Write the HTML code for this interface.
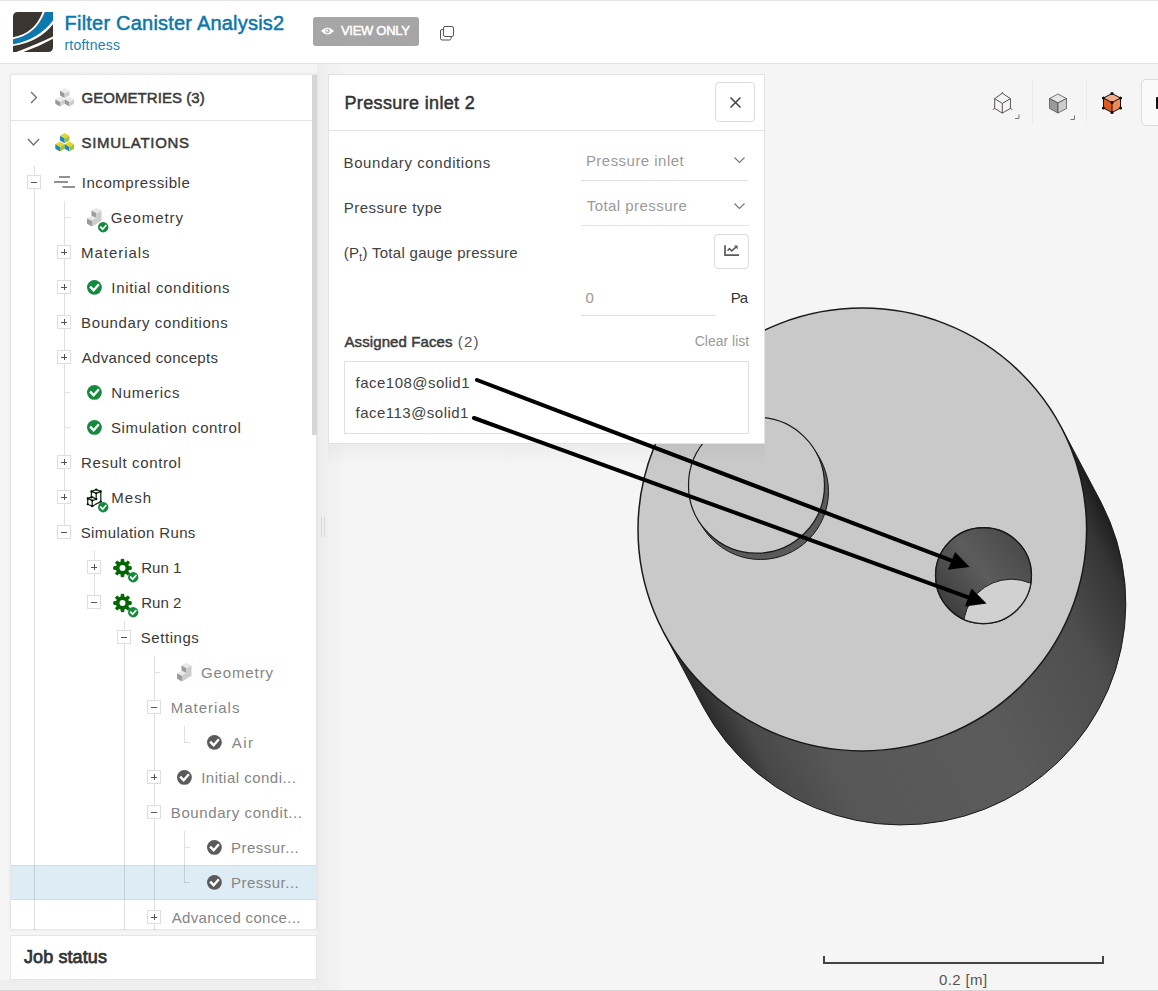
<!DOCTYPE html>
<html><head><meta charset="utf-8">
<style>
html,body{margin:0;padding:0;}
body{width:1158px;height:991px;overflow:hidden;position:relative;background:#f5f5f5;font-family:"Liberation Sans", sans-serif;}
.t{position:absolute;line-height:1;white-space:nowrap;}
svg{position:absolute;overflow:visible;}
</style></head><body>
<svg style="left:0;top:0" width="1158" height="991" viewBox="0 0 1158 991">
<defs>
<linearGradient id="side" x1="1080.7" y1="463.9" x2="683.1" y2="669.1" gradientUnits="userSpaceOnUse">
<stop offset="0" stop-color="#1e1e1e"/><stop offset="0.05" stop-color="#353535"/><stop offset="0.18" stop-color="#4e4e4e"/><stop offset="0.45" stop-color="#5b5b5b"/><stop offset="0.8" stop-color="#575757"/><stop offset="0.93" stop-color="#484848"/><stop offset="1" stop-color="#2a2a2a"/>
</linearGradient>
<linearGradient id="hole" x1="940" y1="610" x2="1030" y2="540" gradientUnits="userSpaceOnUse">
<stop offset="0" stop-color="#3a3a3a"/><stop offset="0.5" stop-color="#5c5c5c"/><stop offset="1" stop-color="#464646"/>
</linearGradient>
<clipPath id="hclip"><circle cx="983.5" cy="575.6" r="48"/></clipPath>
</defs>
<path d="M1061.1,426.9 L1100.3,500.9 A224.3,221.4 0 0 1 702.7,706.1 L663.5,632.1 Z" fill="url(#side)" stroke="#1a1a1a" stroke-width="1"/>
<ellipse cx="862.3" cy="529.5" rx="224.3" ry="221.4" fill="#c9c9c9" stroke="#1a1a1a" stroke-width="1.5"/>
<circle cx="760.5" cy="491.5" r="68" fill="#5a5a5a" stroke="#1a1a1a" stroke-width="1"/>
<circle cx="756.5" cy="485.2" r="68" fill="#c9c9c9" stroke="#1a1a1a" stroke-width="1.2"/>
<circle cx="983.5" cy="575.6" r="48" fill="url(#hole)" stroke="#1a1a1a" stroke-width="1.2"/>
<circle cx="1011.3" cy="627.2" r="48" fill="#d1d1d1" stroke="#1a1a1a" stroke-width="1" clip-path="url(#hclip)"/>
<circle cx="983.5" cy="575.6" r="48" fill="none" stroke="#1a1a1a" stroke-width="1.2"/>
</svg>
<div style="position:absolute;left:0px;top:0px;width:1158px;height:63px;background:#fff;border-top:1px solid #e3e3e3;box-sizing:border-box;"></div>
<div style="position:absolute;left:0px;top:63px;width:1158px;height:1px;background:#e2e2e2;"></div>
<svg style="left:13px;top:12px" width="40" height="40" viewBox="0 0 40 40">
<defs><clipPath id="lg"><path d="M5,0 H40 V35 Q40,40 35,40 H0 V5 Q0,0 5,0 Z"/></clipPath></defs>
<g clip-path="url(#lg)">
<rect width="40" height="40" fill="#3a3531"/>
<path d="M0,27.2 Q23,23 31.8,0 L40,0 L40,8.6 Q25,28 0,32.3 Z" fill="#0b78b0"/>
<path d="M0,25.3 Q21.5,21.5 29.5,0 L31.8,0 Q23,23 0,27.2 Z" fill="#fff"/>
<path d="M0,32.3 Q25,28 40,8.6 L40,12.3 Q26,30 0,34.1 Z" fill="#fff"/>
<path d="M2,40.5 Q24,32 40,24.4 L40,26.7 Q26,34.5 9,40.5 Z" fill="#fff"/>
</g></svg>
<div class="t" style="left:64.6px;top:12.67px;font-size:20px;font-weight:400;color:#0b77ac;letter-spacing:0.21px;-webkit-text-stroke:0.5px #0b77ac;">Filter Canister Analysis2</div>
<div class="t" style="left:64.4px;top:37.75px;font-size:14px;font-weight:400;color:#1a7fb3;letter-spacing:0.25px;">rtoftness</div>
<div style="position:absolute;left:313px;top:17px;width:106px;height:29px;background:#a6a6a6;border-radius:3px;"></div>
<svg style="left:321px;top:27px" width="13" height="8" viewBox="0 0 13 8">
<path d="M0,4 Q6.5,-3 13,4 Q6.5,11 0,4 Z" fill="#fff"/><circle cx="6.5" cy="4" r="2.4" fill="#b8b8b8"/><circle cx="6.1" cy="3.6" r="1.1" fill="#fff"/>
</svg>
<div class="t" style="left:341px;top:23.80px;font-size:13px;font-weight:400;color:#fff;letter-spacing:-0.3px;-webkit-text-stroke:0.5px #fff;">VIEW ONLY</div>
<svg style="left:440px;top:26px" width="15" height="15" viewBox="0 0 15 15">
<rect x="3.5" y="0.5" width="10" height="10" rx="1.5" fill="#fff" stroke="#555" stroke-width="1"/>
<path d="M3.5,3.5 H2 Q0.5,3.5 0.5,5 V12.5 Q0.5,14 2,14 H9.5 Q11,14 11,12.5 V10.5" fill="none" stroke="#555" stroke-width="1"/>
</svg>
<div style="position:absolute;left:10px;top:74px;width:307px;height:856px;background:#fff;border:1px solid #e6e6e6;box-sizing:border-box;box-shadow:0 0 3px rgba(0,0,0,0.06);"></div>
<div style="position:absolute;left:11px;top:120px;width:301px;height:1px;background:#e3e3e3;"></div>
<div style="position:absolute;left:312px;top:75px;width:5px;height:360px;background:#d6d6d6;"></div>
<svg style="left:30px;top:91px" width="8" height="13" viewBox="0 0 8 13"><path d="M1,1 L6.5,6.5 L1,12" fill="none" stroke="#707070" stroke-width="1.4"/></svg>
<svg style="left:27px;top:138px" width="13" height="9" viewBox="0 0 13 9"><path d="M1,1 L6.5,7 L12,1" fill="none" stroke="#707070" stroke-width="1.4"/></svg>
<svg style="left:55px;top:88px" width="20" height="20" viewBox="0 0 20 20"><path d="M9.7,0 L14.399999999999999,2.754 L9.7,5.508 L4.999999999999999,2.754 Z" fill="#ececec"/><path d="M4.999999999999999,2.754 L9.7,5.508 L9.7,10.2 L4.999999999999999,7.446 Z" fill="#9a9a9a"/><path d="M14.399999999999999,2.754 L9.7,5.508 L9.7,10.2 L14.399999999999999,7.446 Z" fill="#cfcfcf"/><path d="M5,8.4 L9.7,11.154 L5,13.908000000000001 L0.2999999999999998,11.154 Z" fill="#ececec"/><path d="M0.2999999999999998,11.154 L5,13.908000000000001 L5,18.6 L0.2999999999999998,15.846000000000002 Z" fill="#9a9a9a"/><path d="M9.7,11.154 L5,13.908000000000001 L5,18.6 L9.7,15.846000000000002 Z" fill="#cfcfcf"/><path d="M14.4,8.4 L19.1,11.154 L14.4,13.908000000000001 L9.7,11.154 Z" fill="#ececec"/><path d="M9.7,11.154 L14.4,13.908000000000001 L14.4,18.6 L9.7,15.846000000000002 Z" fill="#9a9a9a"/><path d="M19.1,11.154 L14.4,13.908000000000001 L14.4,18.6 L19.1,15.846000000000002 Z" fill="#cfcfcf"/></svg>
<svg style="left:55px;top:132.5px" width="20" height="20" viewBox="0 0 20 20"><path d="M9.7,0 L14.399999999999999,2.754 L9.7,5.508 L4.999999999999999,2.754 Z" fill="#e2d52b"/><path d="M4.999999999999999,2.754 L9.7,5.508 L9.7,10.2 L4.999999999999999,7.446 Z" fill="#1b86bf"/><path d="M14.399999999999999,2.754 L9.7,5.508 L9.7,10.2 L14.399999999999999,7.446 Z" fill="#9fc23a"/><path d="M5,8.4 L9.7,11.154 L5,13.908000000000001 L0.2999999999999998,11.154 Z" fill="#e2d52b"/><path d="M0.2999999999999998,11.154 L5,13.908000000000001 L5,18.6 L0.2999999999999998,15.846000000000002 Z" fill="#1b86bf"/><path d="M9.7,11.154 L5,13.908000000000001 L5,18.6 L9.7,15.846000000000002 Z" fill="#9fc23a"/><path d="M14.4,8.4 L19.1,11.154 L14.4,13.908000000000001 L9.7,11.154 Z" fill="#e2d52b"/><path d="M9.7,11.154 L14.4,13.908000000000001 L14.4,18.6 L9.7,15.846000000000002 Z" fill="#1b86bf"/><path d="M19.1,11.154 L14.4,13.908000000000001 L14.4,18.6 L19.1,15.846000000000002 Z" fill="#9fc23a"/></svg>
<div class="t" style="left:81.5px;top:90.10px;font-size:15px;font-weight:400;color:#3a3a3a;letter-spacing:0.05px;-webkit-text-stroke:0.5px #3a3a3a;">GEOMETRIES (3)</div>
<div class="t" style="left:81.5px;top:134.70px;font-size:15px;font-weight:400;color:#3a3a3a;letter-spacing:0.7px;-webkit-text-stroke:0.5px #3a3a3a;">SIMULATIONS</div>
<div style="position:absolute;left:11px;top:865px;width:305px;height:35px;background:#deedf5;border-top:1px solid #c9e1ee;border-bottom:1px solid #c9e1ee;box-sizing:border-box;"></div>
<div style="position:absolute;left:34px;top:166px;width:1px;height:764px;background:rgba(0,0,0,0.12);"></div>
<div style="position:absolute;left:64px;top:201px;width:1px;height:331px;background:rgba(0,0,0,0.12);"></div>
<div style="position:absolute;left:94px;top:551px;width:1px;height:51px;background:rgba(0,0,0,0.12);"></div>
<div style="position:absolute;left:124px;top:621px;width:1px;height:309px;background:rgba(0,0,0,0.12);"></div>
<div style="position:absolute;left:154px;top:656px;width:1px;height:274px;background:rgba(0,0,0,0.12);"></div>
<div style="position:absolute;left:184px;top:726px;width:1px;height:17px;background:rgba(0,0,0,0.12);"></div>
<div style="position:absolute;left:184px;top:831px;width:1px;height:52px;background:rgba(0,0,0,0.12);"></div>
<div style="position:absolute;left:65px;top:217px;width:5px;height:1px;background:rgba(0,0,0,0.12);"></div>
<div style="position:absolute;left:65px;top:392px;width:5px;height:1px;background:rgba(0,0,0,0.12);"></div>
<div style="position:absolute;left:65px;top:427px;width:5px;height:1px;background:rgba(0,0,0,0.12);"></div>
<div style="position:absolute;left:155px;top:672px;width:5px;height:1px;background:rgba(0,0,0,0.12);"></div>
<div style="position:absolute;left:185px;top:742px;width:5px;height:1px;background:rgba(0,0,0,0.12);"></div>
<div style="position:absolute;left:185px;top:847px;width:5px;height:1px;background:rgba(0,0,0,0.12);"></div>
<div style="position:absolute;left:185px;top:882px;width:5px;height:1px;background:rgba(0,0,0,0.12);"></div>
<div style="position:absolute;left:27px;top:175px;width:14px;height:14px;background:#fff;border:1px solid #dedede;box-sizing:border-box;"></div>
<div style="position:absolute;left:31px;top:182px;width:6px;height:1px;background:#555;"></div>
<svg style="left:54px;top:176.0px" width="22" height="12" viewBox="0 0 22 12"><path d="M5,1 H16 M0,6 H14 M8.5,11 H21" stroke="#6f6f6f" stroke-width="1.6"/></svg>
<div class="t" style="left:81.75px;top:175.10px;font-size:15px;font-weight:400;color:#3a3a3a;letter-spacing:0.55px;">Incompressible</div>
<svg style="left:87px;top:208.0px" width="16" height="19" viewBox="0 0 16 19"><path d="M4.5,2.6 L9.5,0 L14.5,2.6 L9.5,5.2 Z" fill="#e8e8e8"/><path d="M4.5,2.6 L9.5,5.2 L9.5,15.5 L4.5,12.9 Z" fill="#9c9c9c"/><path d="M14.5,2.6 L9.5,5.2 L9.5,15.5 L14.5,12.9 Z" fill="#cdcdcd"/><path d="M0,10.3 L5,7.7 L10,10.3 L5,12.9 Z" fill="#e8e8e8"/><path d="M0,10.3 L5,12.9 L5,18.4 L0,15.8 Z" fill="#9c9c9c"/><path d="M10,10.3 L5,12.9 L5,18.4 L10,15.8 Z" fill="#cdcdcd"/></svg>
<svg style="left:97.8px;top:221.8px" width="10.4" height="10.4" viewBox="-5.2 -5.2 10.4 10.4"><circle r="5.2" fill="#138a3e"/><path d="M-2.44,0.00 L-0.52,1.98 L2.60,-1.56" fill="none" stroke="#fff" stroke-width="1.66" stroke-linecap="square"/></svg>
<div class="t" style="left:110.8px;top:210.10px;font-size:15px;font-weight:400;color:#3a3a3a;letter-spacing:0.9px;">Geometry</div>
<div style="position:absolute;left:57px;top:245px;width:14px;height:14px;background:#fff;border:1px solid #dedede;box-sizing:border-box;"></div>
<div style="position:absolute;left:61px;top:252px;width:6px;height:1px;background:#555;"></div>
<div style="position:absolute;left:63.5px;top:249px;width:1px;height:6px;background:#555;"></div>
<div class="t" style="left:81.1px;top:245.10px;font-size:15px;font-weight:400;color:#3a3a3a;letter-spacing:0.94px;">Materials</div>
<div style="position:absolute;left:57px;top:280px;width:14px;height:14px;background:#fff;border:1px solid #dedede;box-sizing:border-box;"></div>
<div style="position:absolute;left:61px;top:287px;width:6px;height:1px;background:#555;"></div>
<div style="position:absolute;left:63.5px;top:284px;width:1px;height:6px;background:#555;"></div>
<svg style="left:87.1px;top:279.8px" width="14.8" height="14.8" viewBox="-7.4 -7.4 14.8 14.8"><circle r="7.4" fill="#138a3e"/><path d="M-3.48,0.00 L-0.74,2.81 L3.70,-2.22" fill="none" stroke="#fff" stroke-width="2.37" stroke-linecap="square"/></svg>
<div class="t" style="left:111.3px;top:280.10px;font-size:15px;font-weight:400;color:#3a3a3a;letter-spacing:0.68px;">Initial conditions</div>
<div style="position:absolute;left:57px;top:315px;width:14px;height:14px;background:#fff;border:1px solid #dedede;box-sizing:border-box;"></div>
<div style="position:absolute;left:61px;top:322px;width:6px;height:1px;background:#555;"></div>
<div style="position:absolute;left:63.5px;top:319px;width:1px;height:6px;background:#555;"></div>
<div class="t" style="left:81.1px;top:315.10px;font-size:15px;font-weight:400;color:#3a3a3a;letter-spacing:0.6px;">Boundary conditions</div>
<div style="position:absolute;left:57px;top:350px;width:14px;height:14px;background:#fff;border:1px solid #dedede;box-sizing:border-box;"></div>
<div style="position:absolute;left:61px;top:357px;width:6px;height:1px;background:#555;"></div>
<div style="position:absolute;left:63.5px;top:354px;width:1px;height:6px;background:#555;"></div>
<div class="t" style="left:81.7px;top:350.10px;font-size:15px;font-weight:400;color:#3a3a3a;letter-spacing:0.34px;">Advanced concepts</div>
<svg style="left:87.1px;top:384.8px" width="14.8" height="14.8" viewBox="-7.4 -7.4 14.8 14.8"><circle r="7.4" fill="#138a3e"/><path d="M-3.48,0.00 L-0.74,2.81 L3.70,-2.22" fill="none" stroke="#fff" stroke-width="2.37" stroke-linecap="square"/></svg>
<div class="t" style="left:111.3px;top:385.10px;font-size:15px;font-weight:400;color:#3a3a3a;letter-spacing:0.7px;">Numerics</div>
<svg style="left:87.1px;top:419.8px" width="14.8" height="14.8" viewBox="-7.4 -7.4 14.8 14.8"><circle r="7.4" fill="#138a3e"/><path d="M-3.48,0.00 L-0.74,2.81 L3.70,-2.22" fill="none" stroke="#fff" stroke-width="2.37" stroke-linecap="square"/></svg>
<div class="t" style="left:111.0px;top:420.10px;font-size:15px;font-weight:400;color:#3a3a3a;letter-spacing:0.62px;">Simulation control</div>
<div style="position:absolute;left:57px;top:455px;width:14px;height:14px;background:#fff;border:1px solid #dedede;box-sizing:border-box;"></div>
<div style="position:absolute;left:61px;top:462px;width:6px;height:1px;background:#555;"></div>
<div style="position:absolute;left:63.5px;top:459px;width:1px;height:6px;background:#555;"></div>
<div class="t" style="left:81.1px;top:455.10px;font-size:15px;font-weight:400;color:#3a3a3a;letter-spacing:0.62px;">Result control</div>
<div style="position:absolute;left:57px;top:490px;width:14px;height:14px;background:#fff;border:1px solid #dedede;box-sizing:border-box;"></div>
<div style="position:absolute;left:61px;top:497px;width:6px;height:1px;background:#555;"></div>
<div style="position:absolute;left:63.5px;top:494px;width:1px;height:6px;background:#555;"></div>
<svg style="left:84px;top:485.0px" width="20" height="24" viewBox="0 0 20 24"><g fill="none" stroke="#0f2f0f" stroke-width="1.25" stroke-linejoin="round"><path d="M7.4,6.4 L12.2,4.6 L16.8,6.4 L12.2,8.3 Z M7.4,6.4 V12.6 M12.2,8.3 V14.1 M16.8,6.4 V16.6 L10.5,19.9"/><path d="M3.7,13.4 L8.2,11.9 L12.4,14.1 L8.2,15.6 Z M3.7,13.4 V19.2 L8.2,21.3 V15.6 M8.2,21.3 L10.5,20.1"/></g><g fill="{c}"><circle cx="7.4" cy="6.4" r="1.05"/><circle cx="12.2" cy="4.6" r="1.05"/><circle cx="16.8" cy="6.4" r="1.05"/><circle cx="12.2" cy="8.3" r="1.05"/><circle cx="7.4" cy="12.4" r="1.05"/><circle cx="3.7" cy="13.4" r="1.05"/><circle cx="12.4" cy="14.1" r="1.05"/><circle cx="8.2" cy="15.6" r="1.05"/><circle cx="3.7" cy="19.2" r="1.05"/><circle cx="8.2" cy="21.3" r="1.05"/><circle cx="16.8" cy="16.6" r="1.05"/></g></svg>
<svg style="left:97.8px;top:501.8px" width="10.4" height="10.4" viewBox="-5.2 -5.2 10.4 10.4"><circle r="5.2" fill="#138a3e"/><path d="M-2.44,0.00 L-0.52,1.98 L2.60,-1.56" fill="none" stroke="#fff" stroke-width="1.66" stroke-linecap="square"/></svg>
<div class="t" style="left:111.3px;top:490.10px;font-size:15px;font-weight:400;color:#3a3a3a;letter-spacing:1.0px;">Mesh</div>
<div style="position:absolute;left:57px;top:525px;width:14px;height:14px;background:#fff;border:1px solid #dedede;box-sizing:border-box;"></div>
<div style="position:absolute;left:61px;top:532px;width:6px;height:1px;background:#555;"></div>
<div class="t" style="left:80.7px;top:525.10px;font-size:15px;font-weight:400;color:#3a3a3a;letter-spacing:0.39px;">Simulation Runs</div>
<div style="position:absolute;left:87px;top:560px;width:14px;height:14px;background:#fff;border:1px solid #dedede;box-sizing:border-box;"></div>
<div style="position:absolute;left:91px;top:567px;width:6px;height:1px;background:#555;"></div>
<div style="position:absolute;left:93.5px;top:564px;width:1px;height:6px;background:#555;"></div>
<svg style="left:113px;top:559.0px" width="19" height="19" viewBox="0 0 19 19"><path d="M15.33,7.57 L18.20,7.68 L18.20,10.32 L15.33,10.43 L14.63,12.11 L16.58,14.22 L14.72,16.08 L12.61,14.13 L10.93,14.83 L10.82,17.70 L8.18,17.70 L8.07,14.83 L6.39,14.13 L4.28,16.08 L2.42,14.22 L4.37,12.11 L3.67,10.43 L0.80,10.32 L0.80,7.68 L3.67,7.57 L4.37,5.89 L2.42,3.78 L4.28,1.92 L6.39,3.87 L8.07,3.17 L8.18,0.30 L10.82,0.30 L10.93,3.17 L12.61,3.87 L14.72,1.92 L16.58,3.78 L14.63,5.89 Z" fill="#006700" stroke="#006700" stroke-width="1" stroke-linejoin="round"/><circle cx="9.5" cy="9" r="6.6" fill="#006700"/><circle cx="9.5" cy="9" r="3" fill="#fff"/></svg>
<svg style="left:127.8px;top:571.8px" width="10.4" height="10.4" viewBox="-5.2 -5.2 10.4 10.4"><circle r="5.2" fill="#138a3e"/><path d="M-2.44,0.00 L-0.52,1.98 L2.60,-1.56" fill="none" stroke="#fff" stroke-width="1.66" stroke-linecap="square"/></svg>
<div class="t" style="left:141.2px;top:560.10px;font-size:15px;font-weight:400;color:#3a3a3a;letter-spacing:0.05px;">Run 1</div>
<div style="position:absolute;left:87px;top:595px;width:14px;height:14px;background:#fff;border:1px solid #dedede;box-sizing:border-box;"></div>
<div style="position:absolute;left:91px;top:602px;width:6px;height:1px;background:#555;"></div>
<svg style="left:113px;top:594.0px" width="19" height="19" viewBox="0 0 19 19"><path d="M15.33,7.57 L18.20,7.68 L18.20,10.32 L15.33,10.43 L14.63,12.11 L16.58,14.22 L14.72,16.08 L12.61,14.13 L10.93,14.83 L10.82,17.70 L8.18,17.70 L8.07,14.83 L6.39,14.13 L4.28,16.08 L2.42,14.22 L4.37,12.11 L3.67,10.43 L0.80,10.32 L0.80,7.68 L3.67,7.57 L4.37,5.89 L2.42,3.78 L4.28,1.92 L6.39,3.87 L8.07,3.17 L8.18,0.30 L10.82,0.30 L10.93,3.17 L12.61,3.87 L14.72,1.92 L16.58,3.78 L14.63,5.89 Z" fill="#006700" stroke="#006700" stroke-width="1" stroke-linejoin="round"/><circle cx="9.5" cy="9" r="6.6" fill="#006700"/><circle cx="9.5" cy="9" r="3" fill="#fff"/></svg>
<svg style="left:127.8px;top:606.8px" width="10.4" height="10.4" viewBox="-5.2 -5.2 10.4 10.4"><circle r="5.2" fill="#138a3e"/><path d="M-2.44,0.00 L-0.52,1.98 L2.60,-1.56" fill="none" stroke="#fff" stroke-width="1.66" stroke-linecap="square"/></svg>
<div class="t" style="left:141.2px;top:595.10px;font-size:15px;font-weight:400;color:#3a3a3a;letter-spacing:0.05px;">Run 2</div>
<div style="position:absolute;left:117px;top:630px;width:14px;height:14px;background:#fff;border:1px solid #dedede;box-sizing:border-box;"></div>
<div style="position:absolute;left:121px;top:637px;width:6px;height:1px;background:#555;"></div>
<div class="t" style="left:140.8px;top:630.10px;font-size:15px;font-weight:400;color:#3a3a3a;letter-spacing:0.54px;">Settings</div>
<svg style="left:177px;top:663.0px" width="16" height="19" viewBox="0 0 16 19"><path d="M4.5,2.6 L9.5,0 L14.5,2.6 L9.5,5.2 Z" fill="#e8e8e8"/><path d="M4.5,2.6 L9.5,5.2 L9.5,15.5 L4.5,12.9 Z" fill="#9c9c9c"/><path d="M14.5,2.6 L9.5,5.2 L9.5,15.5 L14.5,12.9 Z" fill="#cdcdcd"/><path d="M0,10.3 L5,7.7 L10,10.3 L5,12.9 Z" fill="#e8e8e8"/><path d="M0,10.3 L5,12.9 L5,18.4 L0,15.8 Z" fill="#9c9c9c"/><path d="M10,10.3 L5,12.9 L5,18.4 L10,15.8 Z" fill="#cdcdcd"/></svg>
<div class="t" style="left:200.9px;top:665.10px;font-size:15px;font-weight:400;color:#858585;letter-spacing:0.9px;">Geometry</div>
<div style="position:absolute;left:147px;top:700px;width:14px;height:14px;background:#fff;border:1px solid #dedede;box-sizing:border-box;"></div>
<div style="position:absolute;left:151px;top:707px;width:6px;height:1px;background:#555;"></div>
<div class="t" style="left:170.8px;top:700.10px;font-size:15px;font-weight:400;color:#858585;letter-spacing:0.97px;">Materials</div>
<svg style="left:207.1px;top:734.8000000000001px" width="14.8" height="14.8" viewBox="-7.4 -7.4 14.8 14.8"><circle r="7.4" fill="#5a5a5a"/><path d="M-3.48,0.00 L-0.74,2.81 L3.70,-2.22" fill="none" stroke="#fff" stroke-width="2.37" stroke-linecap="square"/></svg>
<div class="t" style="left:231.7px;top:735.10px;font-size:15px;font-weight:400;color:#858585;letter-spacing:1.5px;">Air</div>
<div style="position:absolute;left:147px;top:770px;width:14px;height:14px;background:#fff;border:1px solid #dedede;box-sizing:border-box;"></div>
<div style="position:absolute;left:151px;top:777px;width:6px;height:1px;background:#555;"></div>
<div style="position:absolute;left:153.5px;top:774px;width:1px;height:6px;background:#555;"></div>
<svg style="left:177.1px;top:769.8000000000001px" width="14.8" height="14.8" viewBox="-7.4 -7.4 14.8 14.8"><circle r="7.4" fill="#5a5a5a"/><path d="M-3.48,0.00 L-0.74,2.81 L3.70,-2.22" fill="none" stroke="#fff" stroke-width="2.37" stroke-linecap="square"/></svg>
<div class="t" style="left:201.2px;top:770.10px;font-size:15px;font-weight:400;color:#858585;letter-spacing:0.48px;">Initial condi...</div>
<div style="position:absolute;left:147px;top:805px;width:14px;height:14px;background:#fff;border:1px solid #dedede;box-sizing:border-box;"></div>
<div style="position:absolute;left:151px;top:812px;width:6px;height:1px;background:#555;"></div>
<div class="t" style="left:170.8px;top:805.10px;font-size:15px;font-weight:400;color:#858585;letter-spacing:0.6px;">Boundary condit...</div>
<svg style="left:207.1px;top:839.8000000000001px" width="14.8" height="14.8" viewBox="-7.4 -7.4 14.8 14.8"><circle r="7.4" fill="#5a5a5a"/><path d="M-3.48,0.00 L-0.74,2.81 L3.70,-2.22" fill="none" stroke="#fff" stroke-width="2.37" stroke-linecap="square"/></svg>
<div class="t" style="left:231.0px;top:840.10px;font-size:15px;font-weight:400;color:#858585;letter-spacing:0.49px;">Pressur...</div>
<svg style="left:207.1px;top:874.8000000000001px" width="14.8" height="14.8" viewBox="-7.4 -7.4 14.8 14.8"><circle r="7.4" fill="#5a5a5a"/><path d="M-3.48,0.00 L-0.74,2.81 L3.70,-2.22" fill="none" stroke="#fff" stroke-width="2.37" stroke-linecap="square"/></svg>
<div class="t" style="left:231.0px;top:875.10px;font-size:15px;font-weight:400;color:#858585;letter-spacing:0.49px;">Pressur...</div>
<div style="position:absolute;left:147px;top:910px;width:14px;height:14px;background:#fff;border:1px solid #dedede;box-sizing:border-box;"></div>
<div style="position:absolute;left:151px;top:917px;width:6px;height:1px;background:#555;"></div>
<div style="position:absolute;left:153.5px;top:914px;width:1px;height:6px;background:#555;"></div>
<div class="t" style="left:171.8px;top:910.10px;font-size:15px;font-weight:400;color:#858585;letter-spacing:0.32px;">Advanced conce...</div>
<div style="position:absolute;left:317px;top:64px;width:28px;height:927px;background:linear-gradient(to right,rgba(0,0,0,0.035),rgba(0,0,0,0));"></div>
<div style="position:absolute;left:321px;top:517px;width:1px;height:20px;background:#dadada;"></div>
<div style="position:absolute;left:324px;top:517px;width:1px;height:20px;background:#dadada;"></div>
<div style="position:absolute;left:10px;top:935px;width:307px;height:45px;background:#fff;border:1px solid #e6e6e6;box-sizing:border-box;"></div>
<div class="t" style="left:24px;top:948.16px;font-size:18px;font-weight:400;color:#333;letter-spacing:0.1px;-webkit-text-stroke:0.5px #333;-webkit-text-stroke:0.75px #333;">Job status</div>
<div style="position:absolute;left:328px;top:444px;width:437px;height:22px;background:linear-gradient(rgba(0,0,0,0.035),rgba(0,0,0,0));"></div>
<div style="position:absolute;left:328px;top:74px;width:437px;height:370px;background:#fff;border:1px solid #e2e2e2;box-sizing:border-box;"></div>
<div style="position:absolute;left:329px;top:130px;width:435px;height:1px;background:#e3e3e3;"></div>
<div class="t" style="left:344.5px;top:93.76px;font-size:18px;font-weight:400;color:#333;letter-spacing:0.35px;-webkit-text-stroke:0.5px #333;">Pressure inlet 2</div>
<div style="position:absolute;left:715px;top:82px;width:40px;height:40px;background:#fff;border:1px solid #dcdcdc;border-radius:4px;box-sizing:border-box;"></div>
<svg style="left:729.5px;top:96.5px" width="11" height="11" viewBox="0 0 11 11"><path d="M0.5,0.5 L10.5,10.5 M10.5,0.5 L0.5,10.5" stroke="#444" stroke-width="1.5"/></svg>
<div class="t" style="left:343.6px;top:155.00px;font-size:15px;font-weight:400;color:#424242;letter-spacing:0.59px;">Boundary conditions</div>
<div class="t" style="left:343.7px;top:200.10px;font-size:15px;font-weight:400;color:#424242;letter-spacing:0.475px;">Pressure type</div>
<div class="t" style="left:343.7px;top:245.00px;font-size:15px;font-weight:400;color:#424242;letter-spacing:0.3px;">(P<span style="font-size:10px;position:relative;top:3px">t</span>) Total gauge pressure</div>
<div class="t" style="left:585.9px;top:153.20px;font-size:15px;font-weight:400;color:#9a9a9a;letter-spacing:0.47px;">Pressure inlet</div>
<div style="position:absolute;left:581px;top:180px;width:168px;height:1px;background:#e3e3e3;"></div>
<svg style="left:733.5px;top:157px" width="11" height="7" viewBox="0 0 11 7"><path d="M0.5,0.5 L5.5,5.5 L10.5,0.5" fill="none" stroke="#777" stroke-width="1.2"/></svg>
<div class="t" style="left:586.7px;top:198.10px;font-size:15px;font-weight:400;color:#9a9a9a;letter-spacing:0.45px;">Total pressure</div>
<div style="position:absolute;left:581px;top:225px;width:168px;height:1px;background:#e3e3e3;"></div>
<svg style="left:733.5px;top:202.5px" width="11" height="7" viewBox="0 0 11 7"><path d="M0.5,0.5 L5.5,5.5 L10.5,0.5" fill="none" stroke="#777" stroke-width="1.2"/></svg>
<div style="position:absolute;left:714px;top:234px;width:35px;height:35px;background:#fff;border:1px solid #dcdcdc;border-radius:4px;box-sizing:border-box;"></div>
<svg style="left:723.5px;top:245px" width="16" height="12" viewBox="0 0 16 12"><path d="M1,0.3 V10.2 H15" fill="none" stroke="#5a5a5a" stroke-width="1.7"/><path d="M3.6,5.8 L5.5,3.6 L7.7,5.9 L12.5,1.6" fill="none" stroke="#5a5a5a" stroke-width="1.5" stroke-linejoin="round"/><path d="M10,0.6 L13.6,0.6 L13.6,4.4 Z" fill="#5a5a5a"/></svg>
<div class="t" style="left:585.4px;top:289.90px;font-size:15px;font-weight:400;color:#9a9a9a;">0</div>
<div style="position:absolute;left:581px;top:315px;width:135px;height:1px;background:#e3e3e3;"></div>
<div class="t" style="left:730.8px;top:289.90px;font-size:15px;font-weight:400;color:#333;letter-spacing:-1px;">Pa</div>
<div class="t" style="left:344.5px;top:334.10px;font-size:15px;font-weight:400;color:#3c3c3c;letter-spacing:0.1px;-webkit-text-stroke:0.5px #3c3c3c;">Assigned Faces</div>
<div class="t" style="left:457.7px;top:334.10px;font-size:15px;font-weight:400;color:#555;letter-spacing:1.2px;">(2)</div>
<div class="t" style="left:694.7px;top:334.15px;font-size:14px;font-weight:400;color:#9a9a9a;">Clear list</div>
<div style="position:absolute;left:344px;top:361px;width:405px;height:73px;background:#fff;border:1px solid #e0e0e0;box-sizing:border-box;"></div>
<div class="t" style="left:355.6px;top:375.00px;font-size:15px;font-weight:400;color:#424242;letter-spacing:0.47px;">face108@solid1</div>
<div class="t" style="left:355.6px;top:404.90px;font-size:15px;font-weight:400;color:#424242;letter-spacing:0.47px;">face113@solid1</div>
<div style="position:absolute;left:1032px;top:80px;width:1px;height:44px;background:#ededed;"></div>
<div style="position:absolute;left:1086px;top:80px;width:1px;height:44px;background:#ededed;"></div>
<svg style="left:992px;top:92px" width="28" height="28" viewBox="0 0 28 28">
<g fill="none" stroke="#48433e" stroke-width="0.9">
<path d="M10.3,1.2 L18.4,6.6 L18.4,16.4 L10.3,21.1 L2.7,16.4 L2.7,6.6 Z M2.7,6.6 L10.3,11.4 L18.4,6.6 M10.3,11.4 L10.3,21.1 M10.3,1.2 V0 M2.7,16.4 L0.8,17.6 M18.4,16.4 L20.2,17.6"/>
</g>
<path d="M23,26.5 H27 V22.5" fill="none" stroke="#777" stroke-width="1"/>
</svg>
<svg style="left:1048.5px;top:92.5px" width="28" height="28" viewBox="0 0 28 28">
<path d="M9,1 L17.5,5.5 L9,10 L0.5,5.5 Z" fill="#e6e6e6" stroke="#444" stroke-width="0.7"/>
<path d="M0.5,5.5 L9,10 L9,20 L0.5,15.5 Z" fill="#9b9b9b" stroke="#444" stroke-width="0.7"/>
<path d="M17.5,5.5 L9,10 L9,20 L17.5,15.5 Z" fill="#cdcdcd" stroke="#444" stroke-width="0.7"/>
<path d="M21.5,26.5 H25.5 V22.5" fill="none" stroke="#777" stroke-width="1"/>
</svg>
<svg style="left:1102px;top:92px" width="20" height="22" viewBox="0 0 20 22">
<path d="M10,1.5 L18.5,6 L10,10.5 L1.5,6 Z" fill="#f3a98a"/>
<path d="M1.5,6 L10,10.5 L10,20.5 L1.5,16 Z" fill="#e05a1e"/>
<path d="M18.5,6 L10,10.5 L10,20.5 L18.5,16 Z" fill="#ef8a5a"/>
<path d="M10,1.5 L18.5,6 L18.5,16 L10,20.5 L1.5,16 L1.5,6 Z M1.5,6 L10,10.5 L18.5,6 M10,10.5 L10,20.5" fill="none" stroke="#111" stroke-width="1"/>
<g fill="#111"><circle cx="10" cy="1.5" r="1.6"/><circle cx="18.5" cy="6" r="1.6"/><circle cx="18.5" cy="16" r="1.6"/><circle cx="10" cy="20.5" r="1.6"/><circle cx="1.5" cy="16" r="1.6"/><circle cx="1.5" cy="6" r="1.6"/><circle cx="10" cy="10.5" r="1.6"/></g>
</svg>
<div style="position:absolute;left:1141px;top:79px;width:30px;height:47px;background:#fafafa;border:1px solid #c8e1ef;border-radius:5px;box-sizing:border-box;"></div>
<div style="position:absolute;left:1156px;top:97px;width:3px;height:12px;background:#111;border-radius:1px;"></div>
<div style="position:absolute;left:823px;top:962px;width:281px;height:2px;background:#444;"></div>
<div style="position:absolute;left:823px;top:956px;width:2px;height:8px;background:#444;"></div>
<div style="position:absolute;left:1102px;top:956px;width:2px;height:8px;background:#444;"></div>
<div class="t" style="left:939px;top:971.60px;font-size:15px;font-weight:400;color:#555;letter-spacing:0.38px;">0.2 [m]</div>
<div style="position:absolute;left:0px;top:980px;width:317px;height:10px;background:linear-gradient(rgba(0,0,0,0.035),rgba(0,0,0,0.01));"></div>
<div style="position:absolute;left:0px;top:990px;width:1158px;height:1px;background:#d6d6d6;"></div>
<svg style="left:0;top:0" width="1158" height="991" viewBox="0 0 1158 991"><line x1="477" y1="380" x2="956.9" y2="562.7" stroke="#000" stroke-width="4" stroke-linecap="round"/><path d="M969.6,567.1 L955.1,552 L947.9,569.7 Z" fill="#000"/><line x1="474" y1="418" x2="973.8" y2="599.3" stroke="#000" stroke-width="4" stroke-linecap="round"/><path d="M986.6,603.4 L971.5,588.5 L965,606.5 Z" fill="#000"/></svg>
</body></html>
